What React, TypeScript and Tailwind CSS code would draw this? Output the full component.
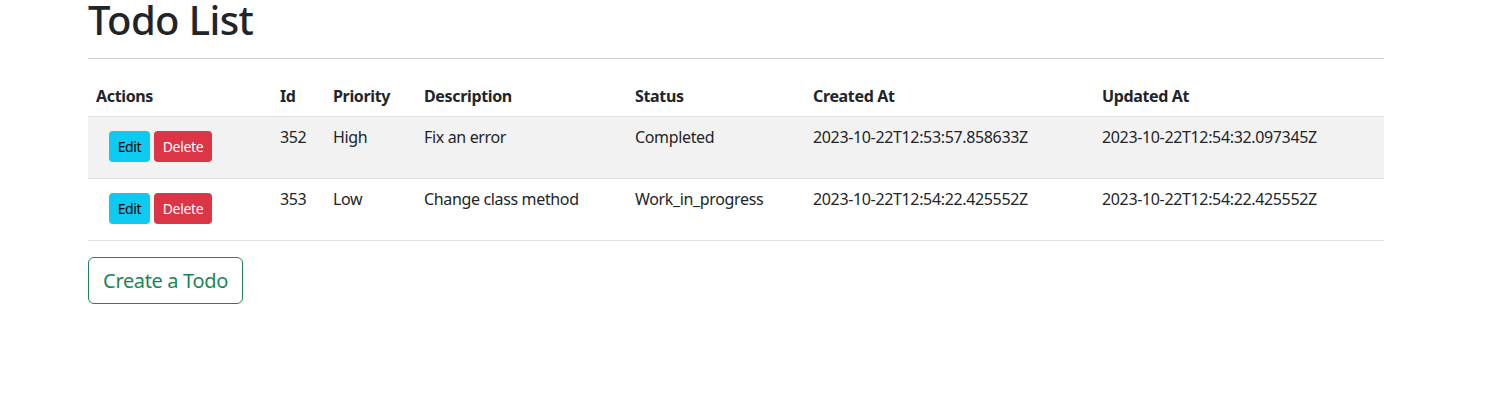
import React from 'react';

interface Todo {
  id: number;
  priority: string;
  description: string;
  status: string;
  createdAt: string;
  updatedAt: string;
}

const todos: Todo[] = [
  {
    id: 352,
    priority: "High",
    description: "Fix an error",
    status: "Completed",
    createdAt: "2023-10-22T12:53:57.858633Z",
    updatedAt: "2023-10-22T12:54:32.097345Z"
  },
  {
    id: 353,
    priority: "Low",
    description: "Change class method",
    status: "Work_in_progress",
    createdAt: "2023-10-22T12:54:22.425552Z",
    updatedAt: "2023-10-22T12:54:22.425552Z"
  }
];

const headers = ["Actions", "Id", "Priority", "Description", "Status", "Created At", "Updated At"];
const widths = ["w-[184px]", "w-[53px]", "w-[91px]", "w-[211px]", "w-[178px]", "w-[289px]", "w-[290px]"];

export default function App() {
  return (
    <div className="min-h-[408px] bg-white text-[#212529] [font-family:'Segoe_UI','Noto_Sans',sans-serif] text-[16px] tracking-[-0.35px]">
      <div className="w-[1296px] ml-[88px]">
        {/* Title */}
        <h1 className="text-[40px] font-medium leading-[40px] tracking-[-0.6px]">Todo List</h1>
        <hr className="mt-[18px] mb-[16px] border-t border-[#cccccc]" />

        {/* Todos table */}
        <table className="w-full table-fixed border-collapse">
          <thead>
            <tr className="border-b border-[#dee2e6]">
              {headers.map((h, i) => (
                <th key={h} className={`${widths[i]} text-left font-bold px-2 pt-[9px] pb-2 leading-6`}>{h}</th>
              ))}
            </tr>
          </thead>
          <tbody>
            {todos.map((todo, index) => (
              <tr key={todo.id} className={`border-b border-[#dee2e6] align-top ${index % 2 === 0 ? "bg-[#f2f2f2]" : "bg-white"}`}>
                <td className="px-2 pt-[14px] pb-[16px]">
                  <div className="flex gap-1 ml-[13px]">
                    <button className="h-[31px] w-[41px] rounded bg-[#0dcaf0] text-black text-[14px]">Edit</button>
                    <button className="h-[31px] w-[58px] rounded bg-[#dc3545] text-white text-[14px]">Delete</button>
                  </div>
                </td>
                <td className="px-2 py-2 leading-6">{todo.id}</td>
                <td className="px-2 py-2 leading-6">{todo.priority}</td>
                <td className="px-2 py-2 leading-6">{todo.description}</td>
                <td className="px-2 py-2 leading-6">{todo.status}</td>
                <td className="px-2 py-2 leading-6">{todo.createdAt}</td>
                <td className="px-2 py-2 leading-6">{todo.updatedAt}</td>
              </tr>
            ))}
          </tbody>
        </table>

        <button className="mt-4 h-[47px] w-[155px] rounded-[6px] border border-[#198754] text-[#198754] text-[20px]">
          Create a Todo
        </button>
      </div>
    </div>
  );
}
